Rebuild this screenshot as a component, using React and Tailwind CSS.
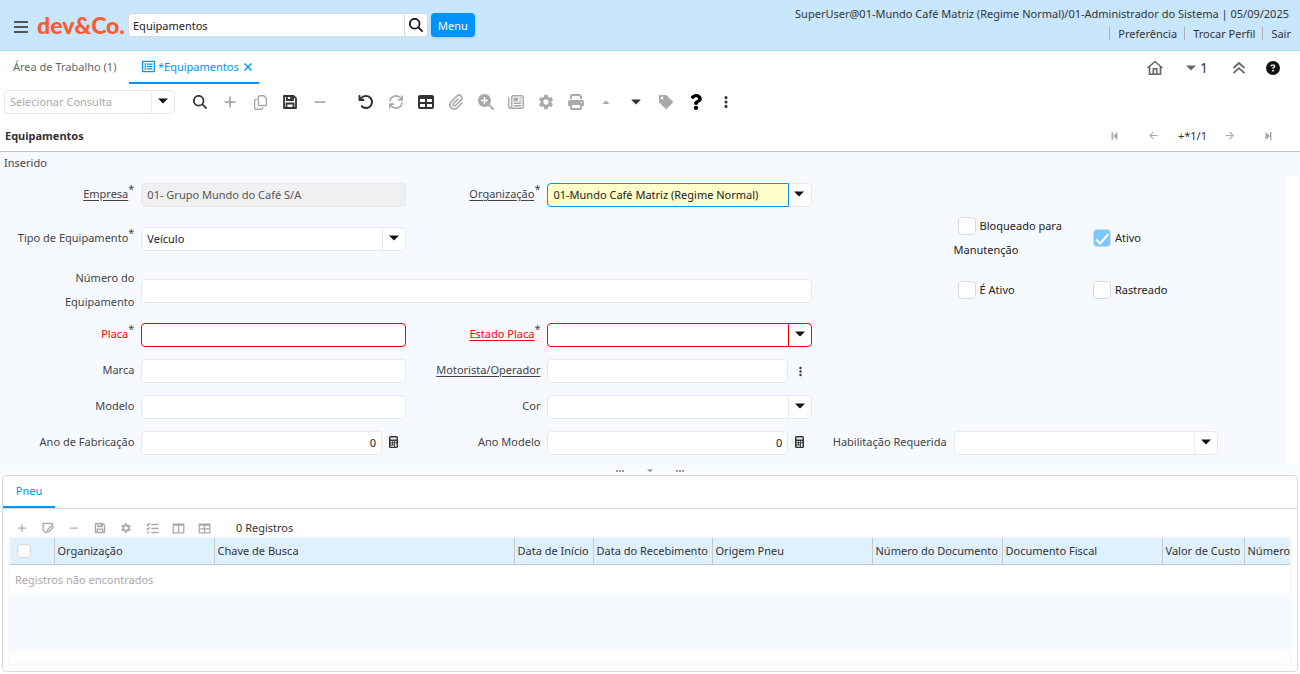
import { useState } from "react";
import { clsx } from "clsx";
import {
    FaArrowRotateLeft,
    FaCircleQuestion,
    FaEllipsisVertical,
    FaMagnifyingGlass,
    FaMagnifyingGlassPlus,
    FaMinus,
    FaPaperclip,
    FaPlus,
    FaPrint,
    FaRegCopy,
    FaRegNewspaper,
    FaTable,
} from "react-icons/fa6";
import { FaQuestion, FaRegListAlt, FaTag } from "react-icons/fa";
import { MdSettings } from "react-icons/md";

function Caret({ up, className = "w-[10px]" }) {
    return (
        <svg className={className} viewBox="0 0 10 6" fill="currentColor">
            <path d={up ? "M0 5.5 5 .5l5 5z" : "M0 .5h10l-5 5z"} />
        </svg>
    );
}

function Stroke({ size = 16, width = 2, children }) {
    return (
        <svg width={size} height={size} viewBox="0 0 16 16" fill="none" stroke="currentColor" strokeWidth={width}>
            {children}
        </svg>
    );
}

const SaveIcon = ({ size }) => (
    <Stroke size={size} width={1.8}>
        <path d="M2 2h9.6L14 4.4V14H2z" strokeLinejoin="round" />
        <path d="M5 2v4h6V2M4.500 14V9.500h7V14M9 2.5v2.5" />
    </Stroke>
);

const RefreshIcon = () => (
    <Stroke width={1.6}>
        <path d="M2 7.5A6 6 0 0 1 12.8 4.300L14 5.7M14 8.5A6 6 0 0 1 3.2 11.700L2 10.3" />
        <path d="M14.2 1.5v4.400H9.800M1.8 14.5v-4.400h4.400" />
    </Stroke>
);

const HomeIcon = () => (
    <Stroke width={1.6}>
        <path d="M.6 8 8 1.5 15.4 8M2.5 6.5v7.700h11V6.500" />
        <path d="M6.300 14V8.800h3.400V14" />
    </Stroke>
);

const AnglesUpIcon = () => (
    <Stroke width={1.8}>
        <path d="m2.5 8 5.500-5 5.500 5M2.500 13.200l5.500-5 5.500 5" />
    </Stroke>
);

const CloseIcon = () => (
    <Stroke size={8} width={2.8}>
        <path d="m1 1 14 14M15 1 1 15" />
    </Stroke>
);

const EditIcon = () => (
    <Stroke size={12} width={1.8}>
        <path d="M14 4V2H1.5v9l3 3H6M7 13.5l.5-3L13 5l2 2-5.500 5.500z" />
    </Stroke>
);

const ChecklistIcon = () => (
    <Stroke size={13} width={1.7}>
        <path d="M6.5 3h9M6.500 8h9M6.500 13h9M.8 3l1.400 1.300L4.800 1.500M.8 8l1.400 1.300L4.800 6.500M1.500 13H4" />
    </Stroke>
);

const ColumnsIcon = () => (
    <Stroke size={13} width={1.6}>
        <path d="M1.5 2.5h13v11h-13zM8 2.5v11" />
        <path d="M1.5 3.5h13" strokeWidth="2.5" />
    </Stroke>
);

const GridIcon = () => (
    <Stroke size={13} width={1.6}>
        <path d="M1.5 2.5h13v11h-13zM8 3v10.500M1.500 8.500h13" />
        <path d="M1.5 3.5h13" strokeWidth="2.5" />
    </Stroke>
);

const CalculatorIcon = () => (
    <svg width="9" height="12" viewBox="0 0 9 12">
        <rect width="9" height="12" rx="1.5" fill="#333" />
        <path d="M1.5 1.5h6v2h-6zM1.500 5H3v1.300H1.500zM3.800 5h1.400v1.300H3.800zM6 5h1.500v1.300H6zM1.500 7.200H3v1.300H1.500zM3.800 7.200h1.400v1.300H3.800zM6 7.200h1.500v3.500H6zM1.500 9.400h3.700v1.300H1.500z" fill="#f6faff" />
    </svg>
);

const FirstIcon = () => (
    <svg width="7" height="8" viewBox="0 0 7 8" fill="currentColor">
        <path d="M.5 0H2v8H.5zM6.500 0v8L2 4z" />
    </svg>
);

const LastIcon = () => (
    <svg width="7" height="8" viewBox="0 0 7 8" fill="currentColor">
        <path d="M5 0h1.500v8H5zM.5 0v8L5 4z" />
    </svg>
);

const PrevIcon = () => (
    <Stroke size={9}>
        <path d="M15 8H2M8 1.5 1.5 8 8 14.5" />
    </Stroke>
);

const NextIcon = () => (
    <Stroke size={9}>
        <path d="M1 8h13M8 1.5 14.5 8 8 14.5" />
    </Stroke>
);

const toolbar = [
    { label: "Localizar", icon: <FaMagnifyingGlass size={14} />, on: true },
    { label: "Novo", icon: <FaPlus size={14} /> },
    { label: "Copiar", icon: <FaRegCopy size={15} /> },
    { label: "Salvar", icon: <SaveIcon />, on: true },
    { label: "Excluir", icon: <FaMinus size={14} /> },
    { label: "Desfazer", icon: <FaArrowRotateLeft size={16} />, on: true, gap: true },
    { label: "Atualizar", icon: <RefreshIcon /> },
    { label: "Alternar grade", icon: <FaTable size={16} />, on: true },
    { label: "Anexo", icon: <FaPaperclip size={16} /> },
    { label: "Zoom", icon: <FaMagnifyingGlassPlus size={16} /> },
    { label: "Relatório", icon: <FaRegNewspaper size={16} /> },
    { label: "Processo", icon: <MdSettings size={18} /> },
    { label: "Imprimir", icon: <FaPrint size={16} /> },
    { label: "Registro pai", icon: <Caret up className="w-2" /> },
    { label: "Registro detalhe", icon: <Caret className="w-[10px]" />, on: true },
    { label: "Etiqueta", icon: <FaTag size={14} /> },
    { label: "Ajuda", icon: <FaQuestion size={16} className="text-black" />, on: true },
    { label: "Mais", icon: <FaEllipsisVertical size={14} />, on: true },
];

const detailToolbar = [
    { label: "Novo registro", icon: <FaPlus size={10} /> },
    { label: "Editar registro", icon: <EditIcon /> },
    { label: "Excluir registro", icon: <FaMinus size={10} /> },
    { label: "Salvar registro", icon: <SaveIcon size={12} /> },
    { label: "Processar", icon: <MdSettings size={12} /> },
    { label: "Selecionar", icon: <ChecklistIcon /> },
    { label: "Colunas", icon: <ColumnsIcon /> },
    { label: "Grade", icon: <GridIcon /> },
];

const columns = [
    { title: "Organização", width: "w-[160px]" },
    { title: "Chave de Busca", width: "w-[300px]" },
    { title: "Data de Início", width: "w-[79px]" },
    { title: "Data do Recebimento", width: "w-[119px]" },
    { title: "Origem Pneu", width: "w-[160px]" },
    { title: "Número do Documento", width: "w-[130px]" },
    { title: "Documento Fiscal", width: "w-[160px]" },
    { title: "Valor de Custo", width: "w-[82px]" },
    { title: "Número", width: "" },
];

function Label({ htmlFor, required, link, error, children }) {
    return (
        <label htmlFor={htmlFor} className="self-center pb-0.5 pr-px text-right leading-6 text-[#444]">
            <span className={clsx(link && "underline underline-offset-2", error && "text-[#f00]")}>{children}</span>
            {required && <span className="align-super leading-[0]">*</span>}
        </label>
    );
}

function TextField({ id, error, number, ...props }) {
    return (
        <input
            id={id}
            type="text"
            className={clsx(
                "block h-6 w-full min-w-0 rounded border px-[5px] pb-0.5 outline-none",
                error ? "border-[#f00]" : "border-[#e8e8e8]",
                props.disabled ? "bg-[#f0f0f0] text-[#555]" : "bg-white text-[#222]",
                number && "text-right"
            )}
            {...props}
        />
    );
}

function Combo({ id, value = "", error, focused, muted, label }) {
    const border = error ? "border-[#f00]" : "border-[#e8e8e8]";
    return (
        <div className="grid w-full">
            <div className={clsx("col-start-1 row-start-1 h-6 rounded border bg-white", border)} />
            <select
                id={id}
                aria-label={label}
                defaultValue={value}
                className={clsx(
                    "col-start-1 row-start-1 h-6 appearance-none border px-[5px] outline-none",
                    focused ? "w-[calc(100%-23px)] rounded-l border-[#0093f9] bg-[#ffffcc]" : "w-full rounded border-transparent bg-transparent",
                    muted ? "text-[#aaa]" : "text-[#222]"
                )}
            >
                <option>{value}</option>
            </select>
            <span
                className={clsx(
                    "pointer-events-none col-start-1 row-start-1 flex h-6 w-6 items-center justify-center justify-self-end pb-0.5 pr-0.5 text-[#111]",
                    !focused && "border-l",
                    border
                )}
            >
                <Caret />
            </span>
        </div>
    );
}

function NumberField({ id }) {
    return (
        <div className="flex items-center">
            <TextField id={id} defaultValue="0" number />
            <button type="button" aria-label="Calculadora" className="flex w-6 shrink-0 justify-center pb-0.5 pr-0.5">
                <CalculatorIcon />
            </button>
        </div>
    );
}

function Check({ children, checked, disabled }) {
    return (
        <label className="block self-center pb-0.5 pl-[6px] leading-6 text-[#222]">
            <span className="mx-1 inline-grid h-[18px] w-[18px] align-[-5px]">
                <input
                    type="checkbox"
                    defaultChecked={checked}
                    disabled={disabled}
                    className="peer col-start-1 row-start-1 h-[18px] w-[18px] appearance-none rounded border border-[#d9d9d9] bg-white checked:bg-[#7ac8ff]"
                />
                <svg viewBox="0 0 18 18" className="pointer-events-none col-start-1 row-start-1 hidden h-[18px] w-[18px] peer-checked:block" fill="none" stroke="#fff" strokeWidth="2">
                    <path d="m3 10.5 4 4L15.500 5" />
                </svg>
            </span>
            {children}
        </label>
    );
}

function Header() {
    return (
        <header className="flex h-[51px] items-center border-b border-[#a6dbff] bg-[#c8e7ff] pl-[14px]">
            <button type="button" aria-label="Abrir menu" className="mt-1 flex w-[14px] flex-col gap-[3px] text-[#555]">
                <span className="h-0.5 bg-current" />
                <span className="h-0.5 bg-current" />
                <span className="h-0.5 bg-current" />
            </button>
            <span className="w-[100px] pl-[9px] font-[Lato] text-[23px] font-black leading-6 text-[#ff5a2b]">dev&amp;Co.</span>
            <form className="flex h-6 w-[300px] rounded border border-[#d9d9d9] bg-white" onSubmit={(e) => e.preventDefault()}>
                <input aria-label="Pesquisar menu" defaultValue="Equipamentos" className="min-w-0 flex-1 px-1 pt-px text-[#222] outline-none" />
                <button aria-label="Pesquisar" className="flex w-[23px] items-center justify-center border-l border-[#d9d9d9] text-[#111]">
                    <FaMagnifyingGlass size={14} />
                </button>
            </form>
            <button type="button" className="ml-[3px] h-6 w-11 rounded bg-[#0093f9] pt-px text-white shadow">
                Menu
            </button>
            <div className="ml-auto flex flex-col items-end gap-[5px] pb-1 pr-[9px] text-[#333]">
                <span className="pr-0.5 leading-4">SuperUser@01-Mundo Café Matriz (Regime Normal)/01-Administrador do Sistema | 05/09/2025</span>
                <nav className="flex gap-[7px] leading-[13px]">
                    <a href="#preferencia" className="border-l border-[#b0b0b0] pl-2">Preferência</a>
                    <a href="#perfil" className="border-l border-[#b0b0b0] pl-2">Trocar Perfil</a>
                    <a href="#sair" className="border-l border-[#b0b0b0] pl-2">Sair</a>
                </nav>
            </div>
        </header>
    );
}

function WindowTabs() {
    return (
        <div className="flex h-[33px] items-stretch">
            <button type="button" className="w-[129px] pb-0.5 pl-[13px] text-left text-[#666]">Área de Trabalho (1)</button>
            <div className="flex w-[130px] items-center gap-[3px] border-b-2 border-[#0093f9] pl-[13px] text-[#0093f9]">
                <FaRegListAlt size={13} />
                <button type="button">*Equipamentos</button>
                <button type="button" aria-label="Fechar aba" className="pl-0.5">
                    <CloseIcon />
                </button>
            </div>
            <div className="ml-auto flex items-center pr-5 pt-px text-[#666]">
                <button type="button" aria-label="Início"><HomeIcon /></button>
                <button type="button" className="ml-[23px] flex items-center gap-1 text-sm text-[#333]">
                    <Caret className="w-[10px] text-[#666]" />1
                </button>
                <button type="button" aria-label="Recolher cabeçalho" className="ml-[23px]"><AnglesUpIcon /></button>
                <button type="button" aria-label="Ajuda" className="ml-[19px] text-[#111]"><FaCircleQuestion size={14} /></button>
            </div>
        </div>
    );
}

function Toolbar() {
    return (
        <div className="flex h-9 items-center pl-1">
            <div className="w-[171px]">
                <Combo label="Consulta" value="Selecionar Consulta" muted />
            </div>
            <div className="flex pl-[10px]">
                {toolbar.map((t) => (
                    <button
                        key={t.label}
                        type="button"
                        aria-label={t.label}
                        className={clsx("flex h-6 w-[30px] items-center justify-center", t.gap && "ml-4", t.on ? "text-[#333]" : "text-[#aaa]")}
                    >
                        {t.icon}
                    </button>
                ))}
            </div>
        </div>
    );
}

function TitleBar() {
    return (
        <div className="flex h-8 items-center justify-between border-b border-[#c4c4c4] pl-[5px] pr-7">
            <h1 className="font-bold text-[#333]">Equipamentos</h1>
            <div className="flex items-center text-[#aaa]">
                <button type="button" aria-label="Primeiro"><FirstIcon /></button>
                <button type="button" aria-label="Anterior" className="ml-[31px]"><PrevIcon /></button>
                <span className="ml-5 mr-[18px] text-[#333]">+*1/1</span>
                <button type="button" aria-label="Próximo"><NextIcon /></button>
                <button type="button" aria-label="Último" className="ml-[31px]"><LastIcon /></button>
            </div>
        </div>
    );
}

function Cell({ className = "col-span-2", children }) {
    return <div className={clsx("self-center pl-[6px]", className)}>{children}</div>;
}

function EquipmentForm() {
    return (
        <div className="bg-[#f6faff] pb-0.5">
            <div className="pb-0.5 pl-1 leading-[22px] text-[#444]">Inserido</div>
            <div className="flex pr-0.5">
                <form className="grid min-w-0 flex-1 grid-cols-[repeat(9,minmax(0,2fr))_minmax(0,1fr)] grid-rows-[36px_52px_52px_repeat(4,36px)] pb-[3px] pt-px">
                    <Label htmlFor="empresa" required link>Empresa</Label>
                    <Cell><TextField id="empresa" defaultValue="01- Grupo Mundo do Café S/A" disabled /></Cell>
                    <Label htmlFor="organizacao" required link>Organização</Label>
                    <Cell><Combo id="organizacao" value="01-Mundo Café Matriz (Regime Normal)" focused /></Cell>

                    <div className="col-start-1 grid items-center">
                        <Label htmlFor="tipo" required>Tipo de Equipamento</Label>
                    </div>
                    <Cell><Combo id="tipo" value="Veículo" /></Cell>
                    <div className="col-start-8 grid"><Check>Bloqueado para Manutenção</Check></div>
                    <div className="col-start-9 grid"><Check checked disabled>Ativo</Check></div>

                    <div className="col-start-1 grid items-center pl-10">
                        <Label htmlFor="numero">Número do Equipamento</Label>
                    </div>
                    <Cell className="col-span-5"><TextField id="numero" /></Cell>
                    <div className="col-start-8 grid"><Check>É Ativo</Check></div>
                    <div className="col-start-9 grid"><Check>Rastreado</Check></div>

                    <div className="col-start-1 grid items-center">
                        <Label htmlFor="placa" required error>Placa</Label>
                    </div>
                    <Cell><TextField id="placa" error /></Cell>
                    <Label htmlFor="estado" required link error>Estado Placa</Label>
                    <Cell><Combo id="estado" error /></Cell>

                    <div className="col-start-1 grid items-center">
                        <Label htmlFor="marca">Marca</Label>
                    </div>
                    <Cell><TextField id="marca" /></Cell>
                    <Label htmlFor="motorista" link>Motorista/Operador</Label>
                    <Cell>
                        <div className="flex items-center">
                            <TextField id="motorista" />
                            <button type="button" aria-label="Buscar motorista" className="flex w-6 shrink-0 justify-center text-[#333]">
                                <FaEllipsisVertical size={11} />
                            </button>
                        </div>
                    </Cell>

                    <div className="col-start-1 grid items-center">
                        <Label htmlFor="modelo">Modelo</Label>
                    </div>
                    <Cell><TextField id="modelo" /></Cell>
                    <Label htmlFor="cor">Cor</Label>
                    <Cell><Combo id="cor" /></Cell>

                    <div className="col-start-1 grid items-center">
                        <Label htmlFor="fabricacao">Ano de Fabricação</Label>
                    </div>
                    <Cell><NumberField id="fabricacao" /></Cell>
                    <Label htmlFor="anomodelo">Ano Modelo</Label>
                    <Cell><NumberField id="anomodelo" /></Cell>
                    <Label htmlFor="habilitacao">Habilitação Requerida</Label>
                    <Cell><Combo id="habilitacao" /></Cell>
                </form>
                <div className="w-3 bg-white" />
            </div>
        </div>
    );
}

function Dots() {
    return (
        <span className="flex gap-px">
            <i className="h-0.5 w-0.5 bg-current" />
            <i className="h-0.5 w-0.5 bg-current" />
            <i className="h-0.5 w-0.5 bg-current" />
        </span>
    );
}

function DetailPanel() {
    return (
        <section className="mx-0.5 mb-0.5 flex flex-1 flex-col rounded border border-[#d9d9d9] bg-white">
            <div className="flex h-[33px] border-b border-[#d9d9d9]">
                <button type="button" className="h-8 w-[52px] border-b-2 border-[#0093f9] text-[#0093f9]">Pneu</button>
            </div>
            <div className="mt-[11px] flex h-4 items-center pl-[6px] text-[#aaa]">
                {detailToolbar.map((t) => (
                    <button key={t.label} type="button" aria-label={t.label} className="flex h-4 w-[26px] items-center justify-center">
                        {t.icon}
                    </button>
                ))}
                <span className="ml-[19px] text-[#333]">0 Registros</span>
            </div>
            <div className="mx-[5px] mb-[5px] flex flex-1 flex-col justify-between overflow-hidden border-2 border-[#f6faff] bg-[#f6faff] pb-px">
                <table className="w-full table-fixed border-collapse text-left">
                    <thead>
                        <tr className="h-[26px] border-b border-[#c8c8c8] bg-[#dff0ff]">
                            <th className="w-[44px] pl-[7px]">
                                <input type="checkbox" aria-label="Selecionar todos" className="block h-[14px] w-[14px] appearance-none rounded border border-[#d9d9d9] bg-white" />
                            </th>
                            {columns.map((c) => (
                                <th key={c.title} className={clsx("overflow-hidden whitespace-nowrap border-l border-[#c8c8c8] pl-[3px] font-normal text-[#333]", c.width)}>
                                    {c.title}
                                </th>
                            ))}
                        </tr>
                    </thead>
                    <tbody>
                        <tr className="h-[31px] bg-white">
                            <td colSpan={10} className="pl-[5px] text-[#aaa]">Registros não encontrados</td>
                        </tr>
                    </tbody>
                </table>
                <div className="h-3 bg-white" />
            </div>
        </section>
    );
}

export default function App() {
    const [detailOpen, setDetailOpen] = useState(true);

    return (
        <div className="flex min-h-screen flex-col bg-white font-['Noto_Sans',sans-serif] text-[11px] leading-4">
            <Header />
            <WindowTabs />
            <Toolbar />
            <TitleBar />
            <EquipmentForm />
            <div className="flex h-[9px] items-center justify-center gap-[23px] bg-[#f9fdff] text-[#999]">
                <Dots />
                <button type="button" aria-label="Recolher detalhe" onClick={() => setDetailOpen(!detailOpen)}>
                    <Caret className="w-[6px]" />
                </button>
                <Dots />
            </div>
            {detailOpen && <DetailPanel />}
        </div>
    );
}
